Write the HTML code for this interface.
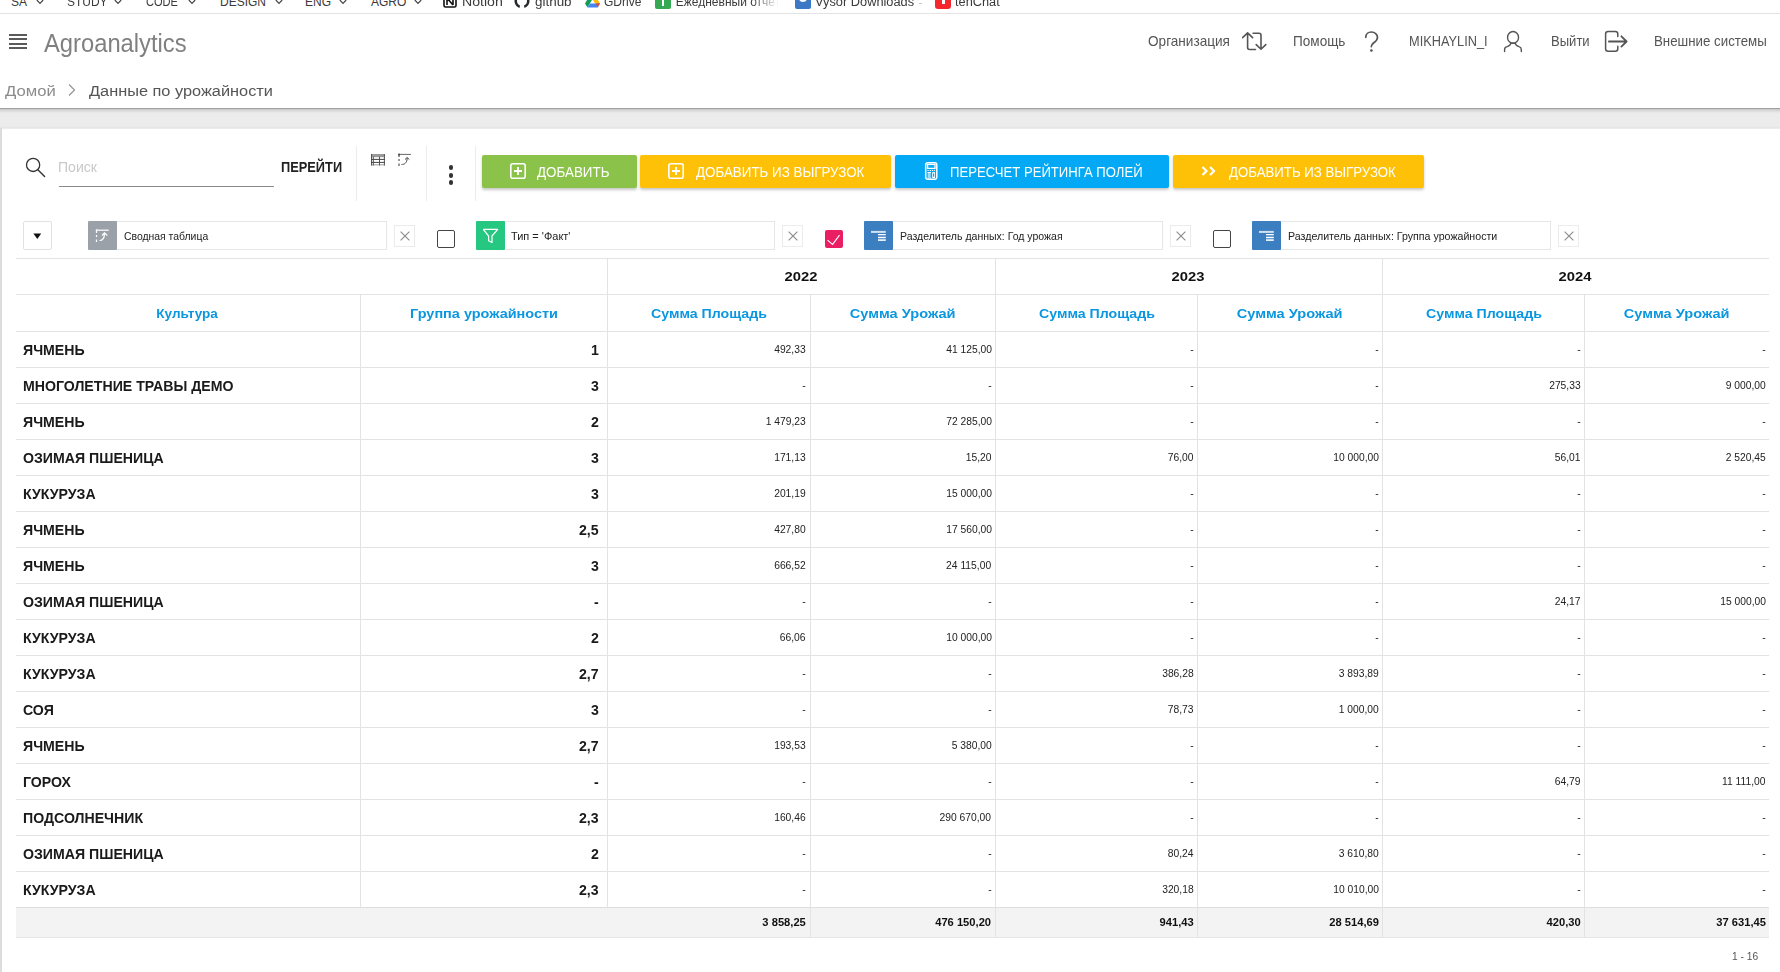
<!DOCTYPE html>
<html><head><meta charset="utf-8"><style>
html,body{margin:0;padding:0;width:1780px;height:972px;overflow:hidden;background:#fff;font-family:"Liberation Sans",sans-serif;}
.t{position:absolute;white-space:nowrap;}
.b{position:absolute;}
.btn{border-radius:2px;box-shadow:0 2px 3px rgba(0,0,0,0.22);}
</style></head><body>
<div class="t" id="bm_SA" style="top:-4.16px;font-size:12px;line-height:12px;color:#3a3a3a;font-weight:400;left:11px;"><span>SA</span></div>
<div class="t" id="bm_STUDY" style="top:-4.16px;font-size:12px;line-height:12px;color:#3a3a3a;font-weight:400;left:66.60000000000001px;"><span style="display:inline-block;transform:scaleX(0.9949);transform-origin:0 0">STUDY</span></div>
<div class="t" id="bm_CODE" style="top:-4.16px;font-size:12px;line-height:12px;color:#3a3a3a;font-weight:400;left:146.0px;"><span style="display:inline-block;transform:scaleX(0.9213);transform-origin:0 0">CODE</span></div>
<div class="t" id="bm_DESIGN" style="top:-4.16px;font-size:12px;line-height:12px;color:#3a3a3a;font-weight:400;left:220px;"><span>DESIGN</span></div>
<div class="t" id="bm_ENG" style="top:-4.16px;font-size:12px;line-height:12px;color:#3a3a3a;font-weight:400;left:305px;"><span>ENG</span></div>
<div class="t" id="bm_AGRO" style="top:-4.16px;font-size:12px;line-height:12px;color:#3a3a3a;font-weight:400;left:371px;"><span>AGRO</span></div>
<svg class="b" style="left:35.5px;top:-1px" width="8" height="6" viewBox="0 0 8 6"><path d="M0.8 1 L4 4.3 L7.2 1" fill="none" stroke="#444" stroke-width="1.2"/></svg>
<svg class="b" style="left:114px;top:-1px" width="8" height="6" viewBox="0 0 8 6"><path d="M0.8 1 L4 4.3 L7.2 1" fill="none" stroke="#444" stroke-width="1.2"/></svg>
<svg class="b" style="left:188px;top:-1px" width="8" height="6" viewBox="0 0 8 6"><path d="M0.8 1 L4 4.3 L7.2 1" fill="none" stroke="#444" stroke-width="1.2"/></svg>
<svg class="b" style="left:275px;top:-1px" width="8" height="6" viewBox="0 0 8 6"><path d="M0.8 1 L4 4.3 L7.2 1" fill="none" stroke="#444" stroke-width="1.2"/></svg>
<svg class="b" style="left:339px;top:-1px" width="8" height="6" viewBox="0 0 8 6"><path d="M0.8 1 L4 4.3 L7.2 1" fill="none" stroke="#444" stroke-width="1.2"/></svg>
<svg class="b" style="left:414px;top:-1px" width="8" height="6" viewBox="0 0 8 6"><path d="M0.8 1 L4 4.3 L7.2 1" fill="none" stroke="#444" stroke-width="1.2"/></svg>
<svg class="b" style="left:443px;top:-4px" width="14" height="12" viewBox="0 0 14 12"><rect x="1" y="0" width="12" height="11" rx="1.5" fill="#fff" stroke="#111" stroke-width="1.6"/><path d="M4 2 L4 9 M4 2 L10 9 M10 2 L10 9" stroke="#111" stroke-width="1.6" fill="none"/></svg>
<div class="t" id="bm_notion" style="top:-4.16px;font-size:12px;line-height:12px;color:#3a3a3a;font-weight:400;left:461.59999999999997px;"><span style="display:inline-block;transform:scaleX(1.1773);transform-origin:0 0">Notion</span></div>
<svg class="b" style="left:514px;top:-6px" width="16" height="15" viewBox="0 0 16 15"><path d="M8 0 C3.5 0 0.5 3 0.5 7 C0.5 10.5 3 13 5.5 14 L6 11.5 C4 10.5 3 9 3 7 C3 4.5 5 2.5 8 2.5 C11 2.5 13 4.5 13 7 C13 9 12 10.5 10 11.5 L10.5 14 C13 13 15.5 10.5 15.5 7 C15.5 3 12.5 0 8 0Z" fill="#24292e"/></svg>
<div class="t" id="bm_github" style="top:-4.16px;font-size:12px;line-height:12px;color:#3a3a3a;font-weight:400;left:534.6px;"><span style="display:inline-block;transform:scaleX(1.1192);transform-origin:0 0">github</span></div>
<svg class="b" style="left:585px;top:-5px" width="15" height="13" viewBox="0 0 15 13"><path d="M5 0 L10 0 L15 8.5 L12.5 12.5 Z" fill="#fbbc04"/><path d="M5 0 L0 8.5 L2.5 12.5 L7.5 4Z" fill="#0f9d58"/><path d="M2.5 12.5 L12.5 12.5 L15 8.5 L5 8.5Z" fill="#4285f4"/><path d="M12.5 12.5 L15 8.5 L11 8.5Z" fill="#ea4335"/></svg>
<div class="t" id="bm_gdrive" style="top:-4.16px;font-size:12px;line-height:12px;color:#3a3a3a;font-weight:400;left:604.1999999999999px;"><span style="display:inline-block;transform:scaleX(1.0029);transform-origin:0 0">GDrive</span></div>
<div class="b" style="left:655px;top:-6px;width:16px;height:15px;background:#34a853;border-radius:2px"></div><div class="b" style="left:661.5px;top:-6px;width:2.5px;height:12px;background:#fff"></div>
<div class="t" style="left:675.8px;top:-4.16px;font-size:12px;line-height:12px;color:#3a3a3a;width:105px;overflow:hidden;white-space:nowrap;-webkit-mask-image:linear-gradient(90deg,#000 72%,transparent 98%)"><span id="bm_ej" style="letter-spacing:0px">Ежедневный отчет</span></div>
<div class="b" style="left:795px;top:-6px;width:16px;height:15px;background:#3c78c6;border-radius:2px"></div><div class="b" style="left:799px;top:-3px;width:8px;height:5px;background:#fff;border-radius:0 0 4px 4px"></div>
<div class="t" id="bm_vysor" style="top:-4.16px;font-size:12px;line-height:12px;color:#3a3a3a;font-weight:400;left:815px;"><span style="display:inline-block;transform:scaleX(1.0664);transform-origin:0 0">Vysor Downloads</span></div>
<div class="b" style="left:919px;top:3px;width:3px;height:1px;background:#c8c8c8"></div>
<div class="b" style="left:935px;top:-6px;width:16px;height:15px;background:#f4282c;border-radius:3px"></div><div class="b" style="left:941.5px;top:-6px;width:3px;height:10px;background:#fff"></div>
<div class="t" id="bm_ten" style="top:-4.16px;font-size:12px;line-height:12px;color:#3a3a3a;font-weight:400;left:954.8000000000001px;"><span style="display:inline-block;transform:scaleX(1.0647);transform-origin:0 0">tenChat</span></div>
<div class="b" style="left:0px;top:13px;width:1780px;height:1px;background:#e3e3e3"></div>
<div class="b" style="left:8.5px;top:34px;width:18px;height:2px;background:#5a5a5a"></div>
<div class="b" style="left:8.5px;top:38px;width:18px;height:2px;background:#5a5a5a"></div>
<div class="b" style="left:8.5px;top:43px;width:18px;height:2px;background:#5a5a5a"></div>
<div class="b" style="left:8.5px;top:47px;width:18px;height:2px;background:#5a5a5a"></div>
<div class="t" id="brand" style="top:29.99px;font-size:26px;line-height:26px;color:#808080;font-weight:400;left:44.199999999999996px;"><span style="display:inline-block;transform:scaleX(0.9136);transform-origin:0 0">Agroanalytics</span></div>
<div class="t" id="h_org" style="top:34.48px;font-size:14.2px;line-height:14.2px;color:#555;font-weight:400;left:1147.8px;"><span style="display:inline-block;transform:scaleX(0.9578);transform-origin:0 0">Организация</span></div>
<div class="t" id="h_help" style="top:34.48px;font-size:14.2px;line-height:14.2px;color:#555;font-weight:400;left:1293.2px;"><span style="display:inline-block;transform:scaleX(0.9569);transform-origin:0 0">Помощь</span></div>
<div class="t" id="h_user" style="top:34.48px;font-size:14.2px;line-height:14.2px;color:#555;font-weight:400;left:1409.0px;"><span style="display:inline-block;transform:scaleX(0.9013);transform-origin:0 0">MIKHAYLIN_I</span></div>
<div class="t" id="h_exit" style="top:34.48px;font-size:14.2px;line-height:14.2px;color:#555;font-weight:400;left:1551px;"><span style="display:inline-block;transform:scaleX(0.9203);transform-origin:0 0">Выйти</span></div>
<div class="t" id="h_ext" style="top:34.48px;font-size:14.2px;line-height:14.2px;color:#555;font-weight:400;left:1654px;"><span style="display:inline-block;transform:scaleX(0.9362);transform-origin:0 0">Внешние системы</span></div>
<svg class="b" style="left:1242px;top:31px" width="26" height="21" viewBox="0 0 26 21"><path d="M0.6 6.6 L5.6 1.8 L10.6 6.6 M5.6 2 V16.5 Q5.6 18.5 7.6 18.5 H13.5" fill="none" stroke="#555" stroke-width="1.6" stroke-linecap="round" stroke-linejoin="round"/><path d="M11.1 2.3 H17 Q19 2.3 19 4.3 V18.2 M14.2 13.6 L19 18.3 L23.8 13.6" fill="none" stroke="#555" stroke-width="1.6" stroke-linecap="round" stroke-linejoin="round"/></svg>
<svg class="b" style="left:1358px;top:28px" width="26" height="27" viewBox="0 0 26 27"><path d="M7.8 9.3 C7.8 6 10.4 4 13.4 4 C16.7 4 19.5 6.3 19.5 9.3 C19.5 12.5 17 13.8 15.5 15 C14 16.3 13.3 17 13.3 18.6" fill="none" stroke="#555" stroke-width="1.7" stroke-linecap="round"/><circle cx="13.4" cy="22.5" r="1.35" fill="#555"/></svg>
<svg class="b" style="left:1500px;top:28px" width="26" height="27" viewBox="0 0 26 27"><ellipse cx="13.05" cy="9.4" rx="5.5" ry="5.9" fill="none" stroke="#555" stroke-width="1.4"/><path d="M10.7 15.3 C10.7 17.5 9 18 7 18.7 C5 19.3 4.6 20 4.6 21.5 V23.5 M15.4 15.3 C15.4 17.5 17 18 19 18.7 C21 19.3 21.3 20 21.3 21.5 V23.5 M10.7 15.3 H15.4" fill="none" stroke="#555" stroke-width="1.4" stroke-linecap="round"/></svg>
<svg class="b" style="left:1600px;top:28px" width="30" height="27" viewBox="0 0 30 27"><path d="M17.8 8.6 V6 C17.8 4.6 16.7 3.5 15.3 3.5 H8.1 C6.7 3.5 5.6 4.6 5.6 6 V20.7 C5.6 22.1 6.7 23.2 8.1 23.2 H15.3 C16.7 23.2 17.8 22.1 17.8 20.7 V18.2" fill="none" stroke="#555" stroke-width="1.5" stroke-linecap="round"/><path d="M8.9 13.5 H26.3 M21.4 8.3 L26.6 13.5 L21.4 18.6" fill="none" stroke="#555" stroke-width="1.8" stroke-linecap="round" stroke-linejoin="round"/></svg>
<div class="t" id="bc_home" style="top:82.56px;font-size:15.4px;line-height:15.4px;color:#8c8c8c;font-weight:400;left:5.0px;"><span style="display:inline-block;transform:scaleX(1.0835);transform-origin:0 0">Домой</span></div>
<svg class="b" style="left:67px;top:83px" width="10" height="14" viewBox="0 0 10 14"><path d="M2 1.5 L7.5 7 L2 12.5" fill="none" stroke="#999" stroke-width="1.3"/></svg>
<div class="t" id="bc_page" style="top:82.56px;font-size:15.4px;line-height:15.4px;color:#555;font-weight:400;left:89px;"><span style="display:inline-block;transform:scaleX(1.0607);transform-origin:0 0">Данные по урожайности</span></div>
<div class="b" style="left:0px;top:108px;width:1780px;height:1px;background:#a0a0a0"></div>
<div class="b" style="left:0px;top:109px;width:1780px;height:20px;background:#ececec"></div>
<div class="b" style="left:0px;top:109px;width:1780px;height:4px;background:linear-gradient(#cacaca,#ececec)"></div>
<div class="b" style="left:0px;top:126px;width:1780px;height:2px;background:linear-gradient(#ebebeb,#e4e4e4)"></div>
<div class="b" style="left:2px;top:129px;width:1778px;height:843px;background:#fff"></div>
<div class="b" style="left:0px;top:128px;width:2px;height:844px;background:#dcdcdc"></div>
<svg class="b" style="left:24px;top:156px" width="23" height="23" viewBox="0 0 23 23"><circle cx="9.1" cy="8.9" r="6.6" fill="none" stroke="#333" stroke-width="1.3"/><path d="M13.8 13.7 L20.6 20.6" stroke="#333" stroke-width="1.4" stroke-linecap="round"/></svg>
<div class="t" id="srch" style="top:159.91px;font-size:14.4px;line-height:14.4px;color:#c9c9c9;font-weight:400;left:58.0px;"><span style="display:inline-block;transform:scaleX(0.9765);transform-origin:0 0">Поиск</span></div>
<div class="b" style="left:59px;top:185.5px;width:215px;height:1.5px;background:#8a8a8a"></div>
<div class="t" id="go" style="top:159.83px;font-size:14.5px;line-height:14.5px;color:#222;font-weight:700;left:280.8px;"><span style="display:inline-block;transform:scaleX(0.8841);transform-origin:0 0">ПЕРЕЙТИ</span></div>
<div class="b" style="left:356px;top:146px;width:1px;height:55px;background:#ececec"></div>
<div class="b" style="left:426px;top:146px;width:1px;height:55px;background:#ececec"></div>
<div class="b" style="left:475px;top:146px;width:1px;height:55px;background:#ececec"></div>
<svg class="b" style="left:370px;top:154px" width="16" height="12" viewBox="0 0 16 12"><rect x="1" y="0" width="14" height="3.2" fill="#9a9a9a"/><rect x="1" y="10" width="14" height="1.5" fill="#bdbdbd"/><path d="M1.5 0 V11.5 M14.4 0 V11.5 M3.3 2.5 V11.5 M9.5 2.5 V11.5" stroke="#555" stroke-width="1"/><path d="M1 5.4 H15 M1 8.4 H15" stroke="#444" stroke-width="1"/></svg>
<svg class="b" style="left:397px;top:153px" width="15" height="14" viewBox="0 0 15 14"><path d="M2 1.4 H13.9" stroke="#666" stroke-width="1"/><circle cx="2" cy="1.5" r="0.9" fill="#333"/><path d="M2 2 V4 M2 6 V8 M2 10.5 V13" stroke="#333" stroke-width="1"/><path d="M4.5 11.5 C7 11.5 10 10.5 10.2 5 M8 6.5 L10.2 4.5 L12.3 6.5" fill="none" stroke="#444" stroke-width="1"/></svg>
<div class="b" style="left:448.65px;top:165.25px;width:4.7px;height:4.7px;border-radius:50%;background:#333"></div>
<div class="b" style="left:448.65px;top:172.95000000000002px;width:4.7px;height:4.7px;border-radius:50%;background:#333"></div>
<div class="b" style="left:448.65px;top:180.45000000000002px;width:4.7px;height:4.7px;border-radius:50%;background:#333"></div>
<div class="b btn" style="left:482px;top:155px;width:155px;height:33px;background:#8bc34a"></div>
<svg class="b" style="left:510px;top:163px" width="16" height="16" viewBox="0 0 16 16"><rect x="0.8" y="0.8" width="14.4" height="14.4" rx="2" fill="none" stroke="#fff" stroke-width="1.6"/><path d="M8 4 V12 M4 8 H12" stroke="#fff" stroke-width="1.8"/></svg>
<div class="t" id="b1" style="top:165.37px;font-size:14.8px;line-height:14.8px;color:#fff;font-weight:400;left:536.8000000000001px;"><span style="display:inline-block;transform:scaleX(0.9051);transform-origin:0 0">ДОБАВИТЬ</span></div>
<div class="b btn" style="left:640px;top:155px;width:251px;height:33px;background:#ffc107"></div>
<svg class="b" style="left:668px;top:163px" width="16" height="16" viewBox="0 0 16 16"><rect x="0.8" y="0.8" width="14.4" height="14.4" rx="2" fill="none" stroke="#fff" stroke-width="1.6"/><path d="M8 4 V12 M4 8 H12" stroke="#fff" stroke-width="1.8"/></svg>
<div class="t" id="b2" style="top:165.37px;font-size:14.8px;line-height:14.8px;color:#fff;font-weight:400;left:696px;"><span style="display:inline-block;transform:scaleX(0.9038);transform-origin:0 0">ДОБАВИТЬ ИЗ ВЫГРУЗОК</span></div>
<div class="b btn" style="left:895px;top:155px;width:274px;height:33px;background:#03a9f4"></div>
<svg class="b" style="left:924px;top:162px" width="14" height="18" viewBox="0 0 14 18"><rect x="1.7" y="0.8" width="11.1" height="16.5" rx="2" fill="none" stroke="#fff" stroke-width="1.5"/><rect x="3.6" y="2.4" width="7.4" height="4" fill="none" stroke="#fff" stroke-width="1.3"/><path d="M3.5 8.5 H11" stroke="#fff" stroke-width="1" stroke-dasharray="1.2 1"/><path d="M3.5 10.5 H7 M3.5 16 H7" stroke="#fff" stroke-width="1"/><rect x="3.7" y="11" width="3" height="4.5" fill="#9fdcfb"/><rect x="8.2" y="10.2" width="2.8" height="5.8" fill="#fff"/><rect x="9" y="11.5" width="1.2" height="3.2" fill="#03a9f4"/></svg>
<div class="t" id="b3" style="top:165.37px;font-size:14.8px;line-height:14.8px;color:#fff;font-weight:400;left:950px;"><span style="display:inline-block;transform:scaleX(0.8868);transform-origin:0 0">ПЕРЕСЧЕТ РЕЙТИНГА ПОЛЕЙ</span></div>
<div class="b btn" style="left:1173px;top:155px;width:251px;height:33px;background:#ffc107"></div>
<svg class="b" style="left:1201px;top:165px" width="16" height="12" viewBox="0 0 16 12"><path d="M1.5 2 L5.5 6 L1.5 10 M9 2 L13 6 L9 10" fill="none" stroke="#fff" stroke-width="2.2"/></svg>
<div class="t" id="b4" style="top:165.37px;font-size:14.8px;line-height:14.8px;color:#fff;font-weight:400;left:1229px;"><span style="display:inline-block;transform:scaleX(0.8952);transform-origin:0 0">ДОБАВИТЬ ИЗ ВЫГРУЗОК</span></div>
<div class="b" style="left:23px;top:221px;width:27px;height:27px;border:1px solid #e2e2e2;border-radius:2px;background:#fff"></div>
<svg class="b" style="left:33px;top:232.5px" width="9" height="7" viewBox="0 0 9 7"><path d="M0.4 0.5 H8.2 L4.3 6Z" fill="#111"/></svg>
<div class="b" style="left:116px;top:221px;width:271px;height:29px;border:1px solid #e6e6e6;border-left:none;box-sizing:border-box;background:#fff"></div>
<div class="b" style="left:88px;top:221px;width:29px;height:29px;background:#9aa1a9;border-radius:1px"></div>
<svg class="b" style="left:95px;top:227px" width="16" height="17" viewBox="0 0 16 17"><path d="M1.5 3.2 H13.8" stroke="#fff" stroke-width="1.2"/><circle cx="1.6" cy="3.2" r="1" fill="#fff"/><path d="M1.5 4 V6 M1.5 8 V10 M1.5 12.5 V15" stroke="#fff" stroke-width="1.2"/><path d="M4.5 13.5 C7 13.5 9.5 12.5 9.5 6.2 M7 8.5 L9.5 5.8 L12.3 8.5" fill="none" stroke="#fff" stroke-width="1.2"/></svg>
<div class="t" id="f1" style="top:230.59px;font-size:11px;line-height:11px;color:#222;font-weight:400;left:124px;"><span style="display:inline-block;transform:scaleX(0.9461);transform-origin:0 0">Сводная таблица</span></div>
<div class="b" style="left:394px;top:225px;width:21px;height:22px;border:1px solid #ebebeb;box-sizing:border-box;background:#fff"></div>
<svg class="b" style="left:399.5px;top:231px" width="10" height="10" viewBox="0 0 10 10"><path d="M0.6 0.6 L9.4 9.4 M9.4 0.6 L0.6 9.4" stroke="#8a8a8a" stroke-width="1.1"/></svg>
<div class="b" style="left:437px;top:230px;width:18px;height:18px;border:1.6px solid #444;border-radius:2px;box-sizing:border-box"></div>
<div class="b" style="left:504px;top:221px;width:271px;height:29px;border:1px solid #e6e6e6;border-left:none;box-sizing:border-box;background:#fff"></div>
<div class="b" style="left:476px;top:221px;width:29px;height:29px;background:#26c780;border-radius:1px"></div>
<svg class="b" style="left:483px;top:227px" width="16" height="17" viewBox="0 0 16 17"><path d="M0.3 2.4 H14.7 L9 9 V15.5 L5.6 13.8 V9 Z" fill="none" stroke="#fff" stroke-width="1.2" stroke-linejoin="round"/></svg>
<div class="t" id="f2" style="top:230.59px;font-size:11px;line-height:11px;color:#222;font-weight:400;left:511.4px;"><span style="display:inline-block;transform:scaleX(0.9984);transform-origin:0 0">Тип = 'Факт'</span></div>
<div class="b" style="left:782px;top:225px;width:21px;height:22px;border:1px solid #ebebeb;box-sizing:border-box;background:#fff"></div>
<svg class="b" style="left:787.5px;top:231px" width="10" height="10" viewBox="0 0 10 10"><path d="M0.6 0.6 L9.4 9.4 M9.4 0.6 L0.6 9.4" stroke="#8a8a8a" stroke-width="1.1"/></svg>
<div class="b" style="left:825px;top:230px;width:18px;height:18px;background:#e91e63;border-radius:2px"></div>
<svg class="b" style="left:825px;top:230px" width="18" height="18" viewBox="0 0 18 18"><path d="M2.5 10.2 L7.6 14.4 L14.5 5.1" fill="none" stroke="#fff" stroke-width="1.1"/></svg>
<div class="b" style="left:892px;top:221px;width:271px;height:29px;border:1px solid #e6e6e6;border-left:none;box-sizing:border-box;background:#fff"></div>
<div class="b" style="left:864px;top:221px;width:29px;height:29px;background:#3b7fc0;border-radius:1px"></div>
<svg class="b" style="left:871px;top:229px" width="16" height="13" viewBox="0 0 16 13"><path d="M0 2.9 H14.8" stroke="#d3e2f0" stroke-width="2"/><path d="M7 5.6 H14.8 M7 8.5 H14.8" stroke="#fff" stroke-width="1.4"/><path d="M7 11.1 H14.8" stroke="#e6eef6" stroke-width="1.8"/></svg>
<div class="t" id="f3" style="top:230.59px;font-size:11px;line-height:11px;color:#222;font-weight:400;left:899.9px;"><span style="display:inline-block;transform:scaleX(0.9565);transform-origin:0 0">Разделитель данных: Год урожая</span></div>
<div class="b" style="left:1170px;top:225px;width:21px;height:22px;border:1px solid #ebebeb;box-sizing:border-box;background:#fff"></div>
<svg class="b" style="left:1175.5px;top:231px" width="10" height="10" viewBox="0 0 10 10"><path d="M0.6 0.6 L9.4 9.4 M9.4 0.6 L0.6 9.4" stroke="#8a8a8a" stroke-width="1.1"/></svg>
<div class="b" style="left:1213px;top:230px;width:18px;height:18px;border:1.6px solid #444;border-radius:2px;box-sizing:border-box"></div>
<div class="b" style="left:1280px;top:221px;width:271px;height:29px;border:1px solid #e6e6e6;border-left:none;box-sizing:border-box;background:#fff"></div>
<div class="b" style="left:1252px;top:221px;width:29px;height:29px;background:#3b7fc0;border-radius:1px"></div>
<svg class="b" style="left:1259px;top:229px" width="16" height="13" viewBox="0 0 16 13"><path d="M0 2.9 H14.8" stroke="#d3e2f0" stroke-width="2"/><path d="M7 5.6 H14.8 M7 8.5 H14.8" stroke="#fff" stroke-width="1.4"/><path d="M7 11.1 H14.8" stroke="#e6eef6" stroke-width="1.8"/></svg>
<div class="t" id="f4" style="top:230.59px;font-size:11px;line-height:11px;color:#222;font-weight:400;left:1288.2px;"><span style="display:inline-block;transform:scaleX(0.9667);transform-origin:0 0">Разделитель данных: Группа урожайности</span></div>
<div class="b" style="left:1558px;top:225px;width:21px;height:22px;border:1px solid #ebebeb;box-sizing:border-box;background:#fff"></div>
<svg class="b" style="left:1563.5px;top:231px" width="10" height="10" viewBox="0 0 10 10"><path d="M0.6 0.6 L9.4 9.4 M9.4 0.6 L0.6 9.4" stroke="#8a8a8a" stroke-width="1.1"/></svg>
<div class="b" style="left:16px;top:258px;width:1753px;height:1px;background:#e3e3e3"></div>
<div class="b" style="left:16px;top:294px;width:1753px;height:1px;background:#e3e3e3"></div>
<div class="b" style="left:16px;top:331px;width:1753px;height:1px;background:#e3e3e3"></div>
<div class="b" style="left:16px;top:367px;width:1753px;height:1px;background:#e3e3e3"></div>
<div class="b" style="left:16px;top:403px;width:1753px;height:1px;background:#e3e3e3"></div>
<div class="b" style="left:16px;top:439px;width:1753px;height:1px;background:#e3e3e3"></div>
<div class="b" style="left:16px;top:475px;width:1753px;height:1px;background:#e3e3e3"></div>
<div class="b" style="left:16px;top:511px;width:1753px;height:1px;background:#e3e3e3"></div>
<div class="b" style="left:16px;top:547px;width:1753px;height:1px;background:#e3e3e3"></div>
<div class="b" style="left:16px;top:583px;width:1753px;height:1px;background:#e3e3e3"></div>
<div class="b" style="left:16px;top:619px;width:1753px;height:1px;background:#e3e3e3"></div>
<div class="b" style="left:16px;top:655px;width:1753px;height:1px;background:#e3e3e3"></div>
<div class="b" style="left:16px;top:691px;width:1753px;height:1px;background:#e3e3e3"></div>
<div class="b" style="left:16px;top:727px;width:1753px;height:1px;background:#e3e3e3"></div>
<div class="b" style="left:16px;top:763px;width:1753px;height:1px;background:#e3e3e3"></div>
<div class="b" style="left:16px;top:799px;width:1753px;height:1px;background:#e3e3e3"></div>
<div class="b" style="left:16px;top:835px;width:1753px;height:1px;background:#e3e3e3"></div>
<div class="b" style="left:16px;top:871px;width:1753px;height:1px;background:#e3e3e3"></div>
<div class="b" style="left:16px;top:907px;width:1753px;height:1px;background:#e3e3e3"></div>
<div class="b" style="left:16px;top:907px;width:1753px;height:30px;background:#f3f3f3"></div>
<div class="b" style="left:16px;top:907px;width:1753px;height:1px;background:#dedede"></div>
<div class="b" style="left:16px;top:937px;width:1753px;height:1px;background:#e6e6e6"></div>
<div class="b" style="left:607px;top:258px;width:1px;height:649px;background:#e3e3e3"></div>
<div class="b" style="left:995px;top:258px;width:1px;height:679px;background:#e3e3e3"></div>
<div class="b" style="left:1382px;top:258px;width:1px;height:679px;background:#e3e3e3"></div>
<div class="b" style="left:360px;top:294px;width:1px;height:613px;background:#e3e3e3"></div>
<div class="b" style="left:810px;top:294px;width:1px;height:643px;background:#e3e3e3"></div>
<div class="b" style="left:1197px;top:294px;width:1px;height:643px;background:#e3e3e3"></div>
<div class="b" style="left:1584px;top:294px;width:1px;height:643px;background:#e3e3e3"></div>
<div class="t" id="yr2022" style="top:270.27px;font-size:13.5px;line-height:13.5px;color:#111;font-weight:700;left:401.0px;width:800px;text-align:center;"><span style="display:inline-block;transform:scaleX(1.0956);transform-origin:50% 0">2022</span></div>
<div class="t" id="yr2023" style="top:270.27px;font-size:13.5px;line-height:13.5px;color:#111;font-weight:700;left:788.5px;width:800px;text-align:center;"><span style="display:inline-block;transform:scaleX(1.0956);transform-origin:50% 0">2023</span></div>
<div class="t" id="yr2024" style="top:270.27px;font-size:13.5px;line-height:13.5px;color:#111;font-weight:700;left:1175.5px;width:800px;text-align:center;"><span style="display:inline-block;transform:scaleX(1.0956);transform-origin:50% 0">2024</span></div>
<div class="t" id="hd0" style="top:307.20px;font-size:13.7px;line-height:13.7px;color:#0b96e0;font-weight:700;left:-212.5px;width:800px;text-align:center;"><span style="display:inline-block;transform:scaleX(0.9907);transform-origin:50% 0">Культура</span></div>
<div class="t" id="hd1" style="top:307.20px;font-size:13.7px;line-height:13.7px;color:#0b96e0;font-weight:700;left:84.0px;width:800px;text-align:center;"><span style="display:inline-block;transform:scaleX(1.0562);transform-origin:50% 0">Группа урожайности</span></div>
<div class="t" id="hd2" style="top:307.20px;font-size:13.7px;line-height:13.7px;color:#0b96e0;font-weight:700;left:309.0px;width:800px;text-align:center;"><span style="display:inline-block;transform:scaleX(1.0357);transform-origin:50% 0">Сумма Площадь</span></div>
<div class="t" id="hd3" style="top:307.20px;font-size:13.7px;line-height:13.7px;color:#0b96e0;font-weight:700;left:503.0px;width:800px;text-align:center;"><span style="display:inline-block;transform:scaleX(1.0654);transform-origin:50% 0">Сумма Урожай</span></div>
<div class="t" id="hd4" style="top:307.20px;font-size:13.7px;line-height:13.7px;color:#0b96e0;font-weight:700;left:696.5px;width:800px;text-align:center;"><span style="display:inline-block;transform:scaleX(1.0357);transform-origin:50% 0">Сумма Площадь</span></div>
<div class="t" id="hd5" style="top:307.20px;font-size:13.7px;line-height:13.7px;color:#0b96e0;font-weight:700;left:890.0px;width:800px;text-align:center;"><span style="display:inline-block;transform:scaleX(1.0654);transform-origin:50% 0">Сумма Урожай</span></div>
<div class="t" id="hd6" style="top:307.20px;font-size:13.7px;line-height:13.7px;color:#0b96e0;font-weight:700;left:1083.5px;width:800px;text-align:center;"><span style="display:inline-block;transform:scaleX(1.0357);transform-origin:50% 0">Сумма Площадь</span></div>
<div class="t" id="hd7" style="top:307.20px;font-size:13.7px;line-height:13.7px;color:#0b96e0;font-weight:700;left:1277.0px;width:800px;text-align:center;"><span style="display:inline-block;transform:scaleX(1.0654);transform-origin:50% 0">Сумма Урожай</span></div>
<div class="t" id="r0" style="top:343.06px;font-size:14.1px;line-height:14.1px;color:#1a1a1a;font-weight:700;left:23px;"><span style="display:inline-block;transform:scaleX(1.0029);transform-origin:0 0">ЯЧМЕНЬ</span></div>
<div class="t" id="g0" style="top:343.06px;font-size:14.1px;line-height:14.1px;color:#1a1a1a;font-weight:700;left:-1.5px;width:600px;text-align:right;"><span style="display:inline-block;transform:scaleX(1.0029);transform-origin:100% 0">1</span></div>
<div class="t" id="n0_2" style="top:343.69px;font-size:11px;line-height:11px;color:#222;font-weight:400;left:206px;width:600px;text-align:right;"><span style="display:inline-block;transform:scaleX(0.9356);transform-origin:100% 0">492,33</span></div>
<div class="t" id="n0_3" style="top:343.69px;font-size:11px;line-height:11px;color:#222;font-weight:400;left:391.5px;width:600px;text-align:right;"><span style="display:inline-block;transform:scaleX(0.9356);transform-origin:100% 0">41 125,00</span></div>
<div class="t" id="n0_4" style="top:343.69px;font-size:11px;line-height:11px;color:#222;font-weight:400;left:593.5px;width:600px;text-align:right;"><span style="display:inline-block;transform:scaleX(0.9356);transform-origin:100% 0">-</span></div>
<div class="t" id="n0_5" style="top:343.69px;font-size:11px;line-height:11px;color:#222;font-weight:400;left:778.5px;width:600px;text-align:right;"><span style="display:inline-block;transform:scaleX(0.9356);transform-origin:100% 0">-</span></div>
<div class="t" id="n0_6" style="top:343.69px;font-size:11px;line-height:11px;color:#222;font-weight:400;left:981px;width:600px;text-align:right;"><span style="display:inline-block;transform:scaleX(0.9356);transform-origin:100% 0">-</span></div>
<div class="t" id="n0_7" style="top:343.69px;font-size:11px;line-height:11px;color:#222;font-weight:400;left:1165.5px;width:600px;text-align:right;"><span style="display:inline-block;transform:scaleX(0.9356);transform-origin:100% 0">-</span></div>
<div class="t" id="r1" style="top:379.06px;font-size:14.1px;line-height:14.1px;color:#1a1a1a;font-weight:700;left:23px;"><span style="display:inline-block;transform:scaleX(1.0029);transform-origin:0 0">МНОГОЛЕТНИЕ ТРАВЫ ДЕМО</span></div>
<div class="t" id="g1" style="top:379.06px;font-size:14.1px;line-height:14.1px;color:#1a1a1a;font-weight:700;left:-1.5px;width:600px;text-align:right;"><span style="display:inline-block;transform:scaleX(1.0029);transform-origin:100% 0">3</span></div>
<div class="t" id="n1_2" style="top:379.69px;font-size:11px;line-height:11px;color:#222;font-weight:400;left:206px;width:600px;text-align:right;"><span style="display:inline-block;transform:scaleX(0.9356);transform-origin:100% 0">-</span></div>
<div class="t" id="n1_3" style="top:379.69px;font-size:11px;line-height:11px;color:#222;font-weight:400;left:391.5px;width:600px;text-align:right;"><span style="display:inline-block;transform:scaleX(0.9356);transform-origin:100% 0">-</span></div>
<div class="t" id="n1_4" style="top:379.69px;font-size:11px;line-height:11px;color:#222;font-weight:400;left:593.5px;width:600px;text-align:right;"><span style="display:inline-block;transform:scaleX(0.9356);transform-origin:100% 0">-</span></div>
<div class="t" id="n1_5" style="top:379.69px;font-size:11px;line-height:11px;color:#222;font-weight:400;left:778.5px;width:600px;text-align:right;"><span style="display:inline-block;transform:scaleX(0.9356);transform-origin:100% 0">-</span></div>
<div class="t" id="n1_6" style="top:379.69px;font-size:11px;line-height:11px;color:#222;font-weight:400;left:981px;width:600px;text-align:right;"><span style="display:inline-block;transform:scaleX(0.9356);transform-origin:100% 0">275,33</span></div>
<div class="t" id="n1_7" style="top:379.69px;font-size:11px;line-height:11px;color:#222;font-weight:400;left:1165.5px;width:600px;text-align:right;"><span style="display:inline-block;transform:scaleX(0.9356);transform-origin:100% 0">9 000,00</span></div>
<div class="t" id="r2" style="top:415.06px;font-size:14.1px;line-height:14.1px;color:#1a1a1a;font-weight:700;left:23px;"><span style="display:inline-block;transform:scaleX(1.0029);transform-origin:0 0">ЯЧМЕНЬ</span></div>
<div class="t" id="g2" style="top:415.06px;font-size:14.1px;line-height:14.1px;color:#1a1a1a;font-weight:700;left:-1.5px;width:600px;text-align:right;"><span style="display:inline-block;transform:scaleX(1.0029);transform-origin:100% 0">2</span></div>
<div class="t" id="n2_2" style="top:415.69px;font-size:11px;line-height:11px;color:#222;font-weight:400;left:206px;width:600px;text-align:right;"><span style="display:inline-block;transform:scaleX(0.9356);transform-origin:100% 0">1 479,23</span></div>
<div class="t" id="n2_3" style="top:415.69px;font-size:11px;line-height:11px;color:#222;font-weight:400;left:391.5px;width:600px;text-align:right;"><span style="display:inline-block;transform:scaleX(0.9356);transform-origin:100% 0">72 285,00</span></div>
<div class="t" id="n2_4" style="top:415.69px;font-size:11px;line-height:11px;color:#222;font-weight:400;left:593.5px;width:600px;text-align:right;"><span style="display:inline-block;transform:scaleX(0.9356);transform-origin:100% 0">-</span></div>
<div class="t" id="n2_5" style="top:415.69px;font-size:11px;line-height:11px;color:#222;font-weight:400;left:778.5px;width:600px;text-align:right;"><span style="display:inline-block;transform:scaleX(0.9356);transform-origin:100% 0">-</span></div>
<div class="t" id="n2_6" style="top:415.69px;font-size:11px;line-height:11px;color:#222;font-weight:400;left:981px;width:600px;text-align:right;"><span style="display:inline-block;transform:scaleX(0.9356);transform-origin:100% 0">-</span></div>
<div class="t" id="n2_7" style="top:415.69px;font-size:11px;line-height:11px;color:#222;font-weight:400;left:1165.5px;width:600px;text-align:right;"><span style="display:inline-block;transform:scaleX(0.9356);transform-origin:100% 0">-</span></div>
<div class="t" id="r3" style="top:451.06px;font-size:14.1px;line-height:14.1px;color:#1a1a1a;font-weight:700;left:23px;"><span style="display:inline-block;transform:scaleX(1.0029);transform-origin:0 0">ОЗИМАЯ ПШЕНИЦА</span></div>
<div class="t" id="g3" style="top:451.06px;font-size:14.1px;line-height:14.1px;color:#1a1a1a;font-weight:700;left:-1.5px;width:600px;text-align:right;"><span style="display:inline-block;transform:scaleX(1.0029);transform-origin:100% 0">3</span></div>
<div class="t" id="n3_2" style="top:451.69px;font-size:11px;line-height:11px;color:#222;font-weight:400;left:206px;width:600px;text-align:right;"><span style="display:inline-block;transform:scaleX(0.9356);transform-origin:100% 0">171,13</span></div>
<div class="t" id="n3_3" style="top:451.69px;font-size:11px;line-height:11px;color:#222;font-weight:400;left:391.5px;width:600px;text-align:right;"><span style="display:inline-block;transform:scaleX(0.9356);transform-origin:100% 0">15,20</span></div>
<div class="t" id="n3_4" style="top:451.69px;font-size:11px;line-height:11px;color:#222;font-weight:400;left:593.5px;width:600px;text-align:right;"><span style="display:inline-block;transform:scaleX(0.9356);transform-origin:100% 0">76,00</span></div>
<div class="t" id="n3_5" style="top:451.69px;font-size:11px;line-height:11px;color:#222;font-weight:400;left:778.5px;width:600px;text-align:right;"><span style="display:inline-block;transform:scaleX(0.9356);transform-origin:100% 0">10 000,00</span></div>
<div class="t" id="n3_6" style="top:451.69px;font-size:11px;line-height:11px;color:#222;font-weight:400;left:981px;width:600px;text-align:right;"><span style="display:inline-block;transform:scaleX(0.9356);transform-origin:100% 0">56,01</span></div>
<div class="t" id="n3_7" style="top:451.69px;font-size:11px;line-height:11px;color:#222;font-weight:400;left:1165.5px;width:600px;text-align:right;"><span style="display:inline-block;transform:scaleX(0.9356);transform-origin:100% 0">2 520,45</span></div>
<div class="t" id="r4" style="top:487.06px;font-size:14.1px;line-height:14.1px;color:#1a1a1a;font-weight:700;left:23px;"><span style="display:inline-block;transform:scaleX(1.0029);transform-origin:0 0">КУКУРУЗА</span></div>
<div class="t" id="g4" style="top:487.06px;font-size:14.1px;line-height:14.1px;color:#1a1a1a;font-weight:700;left:-1.5px;width:600px;text-align:right;"><span style="display:inline-block;transform:scaleX(1.0029);transform-origin:100% 0">3</span></div>
<div class="t" id="n4_2" style="top:487.69px;font-size:11px;line-height:11px;color:#222;font-weight:400;left:206px;width:600px;text-align:right;"><span style="display:inline-block;transform:scaleX(0.9356);transform-origin:100% 0">201,19</span></div>
<div class="t" id="n4_3" style="top:487.69px;font-size:11px;line-height:11px;color:#222;font-weight:400;left:391.5px;width:600px;text-align:right;"><span style="display:inline-block;transform:scaleX(0.9356);transform-origin:100% 0">15 000,00</span></div>
<div class="t" id="n4_4" style="top:487.69px;font-size:11px;line-height:11px;color:#222;font-weight:400;left:593.5px;width:600px;text-align:right;"><span style="display:inline-block;transform:scaleX(0.9356);transform-origin:100% 0">-</span></div>
<div class="t" id="n4_5" style="top:487.69px;font-size:11px;line-height:11px;color:#222;font-weight:400;left:778.5px;width:600px;text-align:right;"><span style="display:inline-block;transform:scaleX(0.9356);transform-origin:100% 0">-</span></div>
<div class="t" id="n4_6" style="top:487.69px;font-size:11px;line-height:11px;color:#222;font-weight:400;left:981px;width:600px;text-align:right;"><span style="display:inline-block;transform:scaleX(0.9356);transform-origin:100% 0">-</span></div>
<div class="t" id="n4_7" style="top:487.69px;font-size:11px;line-height:11px;color:#222;font-weight:400;left:1165.5px;width:600px;text-align:right;"><span style="display:inline-block;transform:scaleX(0.9356);transform-origin:100% 0">-</span></div>
<div class="t" id="r5" style="top:523.06px;font-size:14.1px;line-height:14.1px;color:#1a1a1a;font-weight:700;left:23px;"><span style="display:inline-block;transform:scaleX(1.0029);transform-origin:0 0">ЯЧМЕНЬ</span></div>
<div class="t" id="g5" style="top:523.06px;font-size:14.1px;line-height:14.1px;color:#1a1a1a;font-weight:700;left:-1.5px;width:600px;text-align:right;"><span style="display:inline-block;transform:scaleX(1.0029);transform-origin:100% 0">2,5</span></div>
<div class="t" id="n5_2" style="top:523.69px;font-size:11px;line-height:11px;color:#222;font-weight:400;left:206px;width:600px;text-align:right;"><span style="display:inline-block;transform:scaleX(0.9356);transform-origin:100% 0">427,80</span></div>
<div class="t" id="n5_3" style="top:523.69px;font-size:11px;line-height:11px;color:#222;font-weight:400;left:391.5px;width:600px;text-align:right;"><span style="display:inline-block;transform:scaleX(0.9356);transform-origin:100% 0">17 560,00</span></div>
<div class="t" id="n5_4" style="top:523.69px;font-size:11px;line-height:11px;color:#222;font-weight:400;left:593.5px;width:600px;text-align:right;"><span style="display:inline-block;transform:scaleX(0.9356);transform-origin:100% 0">-</span></div>
<div class="t" id="n5_5" style="top:523.69px;font-size:11px;line-height:11px;color:#222;font-weight:400;left:778.5px;width:600px;text-align:right;"><span style="display:inline-block;transform:scaleX(0.9356);transform-origin:100% 0">-</span></div>
<div class="t" id="n5_6" style="top:523.69px;font-size:11px;line-height:11px;color:#222;font-weight:400;left:981px;width:600px;text-align:right;"><span style="display:inline-block;transform:scaleX(0.9356);transform-origin:100% 0">-</span></div>
<div class="t" id="n5_7" style="top:523.69px;font-size:11px;line-height:11px;color:#222;font-weight:400;left:1165.5px;width:600px;text-align:right;"><span style="display:inline-block;transform:scaleX(0.9356);transform-origin:100% 0">-</span></div>
<div class="t" id="r6" style="top:559.06px;font-size:14.1px;line-height:14.1px;color:#1a1a1a;font-weight:700;left:23px;"><span style="display:inline-block;transform:scaleX(1.0029);transform-origin:0 0">ЯЧМЕНЬ</span></div>
<div class="t" id="g6" style="top:559.06px;font-size:14.1px;line-height:14.1px;color:#1a1a1a;font-weight:700;left:-1.5px;width:600px;text-align:right;"><span style="display:inline-block;transform:scaleX(1.0029);transform-origin:100% 0">3</span></div>
<div class="t" id="n6_2" style="top:559.69px;font-size:11px;line-height:11px;color:#222;font-weight:400;left:206px;width:600px;text-align:right;"><span style="display:inline-block;transform:scaleX(0.9356);transform-origin:100% 0">666,52</span></div>
<div class="t" id="n6_3" style="top:559.69px;font-size:11px;line-height:11px;color:#222;font-weight:400;left:391.5px;width:600px;text-align:right;"><span style="display:inline-block;transform:scaleX(0.9356);transform-origin:100% 0">24 115,00</span></div>
<div class="t" id="n6_4" style="top:559.69px;font-size:11px;line-height:11px;color:#222;font-weight:400;left:593.5px;width:600px;text-align:right;"><span style="display:inline-block;transform:scaleX(0.9356);transform-origin:100% 0">-</span></div>
<div class="t" id="n6_5" style="top:559.69px;font-size:11px;line-height:11px;color:#222;font-weight:400;left:778.5px;width:600px;text-align:right;"><span style="display:inline-block;transform:scaleX(0.9356);transform-origin:100% 0">-</span></div>
<div class="t" id="n6_6" style="top:559.69px;font-size:11px;line-height:11px;color:#222;font-weight:400;left:981px;width:600px;text-align:right;"><span style="display:inline-block;transform:scaleX(0.9356);transform-origin:100% 0">-</span></div>
<div class="t" id="n6_7" style="top:559.69px;font-size:11px;line-height:11px;color:#222;font-weight:400;left:1165.5px;width:600px;text-align:right;"><span style="display:inline-block;transform:scaleX(0.9356);transform-origin:100% 0">-</span></div>
<div class="t" id="r7" style="top:595.06px;font-size:14.1px;line-height:14.1px;color:#1a1a1a;font-weight:700;left:23px;"><span style="display:inline-block;transform:scaleX(1.0029);transform-origin:0 0">ОЗИМАЯ ПШЕНИЦА</span></div>
<div class="t" id="g7" style="top:595.06px;font-size:14.1px;line-height:14.1px;color:#1a1a1a;font-weight:700;left:-1.5px;width:600px;text-align:right;"><span style="display:inline-block;transform:scaleX(1.0029);transform-origin:100% 0">-</span></div>
<div class="t" id="n7_2" style="top:595.69px;font-size:11px;line-height:11px;color:#222;font-weight:400;left:206px;width:600px;text-align:right;"><span style="display:inline-block;transform:scaleX(0.9356);transform-origin:100% 0">-</span></div>
<div class="t" id="n7_3" style="top:595.69px;font-size:11px;line-height:11px;color:#222;font-weight:400;left:391.5px;width:600px;text-align:right;"><span style="display:inline-block;transform:scaleX(0.9356);transform-origin:100% 0">-</span></div>
<div class="t" id="n7_4" style="top:595.69px;font-size:11px;line-height:11px;color:#222;font-weight:400;left:593.5px;width:600px;text-align:right;"><span style="display:inline-block;transform:scaleX(0.9356);transform-origin:100% 0">-</span></div>
<div class="t" id="n7_5" style="top:595.69px;font-size:11px;line-height:11px;color:#222;font-weight:400;left:778.5px;width:600px;text-align:right;"><span style="display:inline-block;transform:scaleX(0.9356);transform-origin:100% 0">-</span></div>
<div class="t" id="n7_6" style="top:595.69px;font-size:11px;line-height:11px;color:#222;font-weight:400;left:981px;width:600px;text-align:right;"><span style="display:inline-block;transform:scaleX(0.9356);transform-origin:100% 0">24,17</span></div>
<div class="t" id="n7_7" style="top:595.69px;font-size:11px;line-height:11px;color:#222;font-weight:400;left:1165.5px;width:600px;text-align:right;"><span style="display:inline-block;transform:scaleX(0.9356);transform-origin:100% 0">15 000,00</span></div>
<div class="t" id="r8" style="top:631.06px;font-size:14.1px;line-height:14.1px;color:#1a1a1a;font-weight:700;left:23px;"><span style="display:inline-block;transform:scaleX(1.0029);transform-origin:0 0">КУКУРУЗА</span></div>
<div class="t" id="g8" style="top:631.06px;font-size:14.1px;line-height:14.1px;color:#1a1a1a;font-weight:700;left:-1.5px;width:600px;text-align:right;"><span style="display:inline-block;transform:scaleX(1.0029);transform-origin:100% 0">2</span></div>
<div class="t" id="n8_2" style="top:631.69px;font-size:11px;line-height:11px;color:#222;font-weight:400;left:206px;width:600px;text-align:right;"><span style="display:inline-block;transform:scaleX(0.9356);transform-origin:100% 0">66,06</span></div>
<div class="t" id="n8_3" style="top:631.69px;font-size:11px;line-height:11px;color:#222;font-weight:400;left:391.5px;width:600px;text-align:right;"><span style="display:inline-block;transform:scaleX(0.9356);transform-origin:100% 0">10 000,00</span></div>
<div class="t" id="n8_4" style="top:631.69px;font-size:11px;line-height:11px;color:#222;font-weight:400;left:593.5px;width:600px;text-align:right;"><span style="display:inline-block;transform:scaleX(0.9356);transform-origin:100% 0">-</span></div>
<div class="t" id="n8_5" style="top:631.69px;font-size:11px;line-height:11px;color:#222;font-weight:400;left:778.5px;width:600px;text-align:right;"><span style="display:inline-block;transform:scaleX(0.9356);transform-origin:100% 0">-</span></div>
<div class="t" id="n8_6" style="top:631.69px;font-size:11px;line-height:11px;color:#222;font-weight:400;left:981px;width:600px;text-align:right;"><span style="display:inline-block;transform:scaleX(0.9356);transform-origin:100% 0">-</span></div>
<div class="t" id="n8_7" style="top:631.69px;font-size:11px;line-height:11px;color:#222;font-weight:400;left:1165.5px;width:600px;text-align:right;"><span style="display:inline-block;transform:scaleX(0.9356);transform-origin:100% 0">-</span></div>
<div class="t" id="r9" style="top:667.06px;font-size:14.1px;line-height:14.1px;color:#1a1a1a;font-weight:700;left:23px;"><span style="display:inline-block;transform:scaleX(1.0029);transform-origin:0 0">КУКУРУЗА</span></div>
<div class="t" id="g9" style="top:667.06px;font-size:14.1px;line-height:14.1px;color:#1a1a1a;font-weight:700;left:-1.5px;width:600px;text-align:right;"><span style="display:inline-block;transform:scaleX(1.0029);transform-origin:100% 0">2,7</span></div>
<div class="t" id="n9_2" style="top:667.69px;font-size:11px;line-height:11px;color:#222;font-weight:400;left:206px;width:600px;text-align:right;"><span style="display:inline-block;transform:scaleX(0.9356);transform-origin:100% 0">-</span></div>
<div class="t" id="n9_3" style="top:667.69px;font-size:11px;line-height:11px;color:#222;font-weight:400;left:391.5px;width:600px;text-align:right;"><span style="display:inline-block;transform:scaleX(0.9356);transform-origin:100% 0">-</span></div>
<div class="t" id="n9_4" style="top:667.69px;font-size:11px;line-height:11px;color:#222;font-weight:400;left:593.5px;width:600px;text-align:right;"><span style="display:inline-block;transform:scaleX(0.9356);transform-origin:100% 0">386,28</span></div>
<div class="t" id="n9_5" style="top:667.69px;font-size:11px;line-height:11px;color:#222;font-weight:400;left:778.5px;width:600px;text-align:right;"><span style="display:inline-block;transform:scaleX(0.9356);transform-origin:100% 0">3 893,89</span></div>
<div class="t" id="n9_6" style="top:667.69px;font-size:11px;line-height:11px;color:#222;font-weight:400;left:981px;width:600px;text-align:right;"><span style="display:inline-block;transform:scaleX(0.9356);transform-origin:100% 0">-</span></div>
<div class="t" id="n9_7" style="top:667.69px;font-size:11px;line-height:11px;color:#222;font-weight:400;left:1165.5px;width:600px;text-align:right;"><span style="display:inline-block;transform:scaleX(0.9356);transform-origin:100% 0">-</span></div>
<div class="t" id="r10" style="top:703.06px;font-size:14.1px;line-height:14.1px;color:#1a1a1a;font-weight:700;left:23px;"><span style="display:inline-block;transform:scaleX(1.0029);transform-origin:0 0">СОЯ</span></div>
<div class="t" id="g10" style="top:703.06px;font-size:14.1px;line-height:14.1px;color:#1a1a1a;font-weight:700;left:-1.5px;width:600px;text-align:right;"><span style="display:inline-block;transform:scaleX(1.0029);transform-origin:100% 0">3</span></div>
<div class="t" id="n10_2" style="top:703.69px;font-size:11px;line-height:11px;color:#222;font-weight:400;left:206px;width:600px;text-align:right;"><span style="display:inline-block;transform:scaleX(0.9356);transform-origin:100% 0">-</span></div>
<div class="t" id="n10_3" style="top:703.69px;font-size:11px;line-height:11px;color:#222;font-weight:400;left:391.5px;width:600px;text-align:right;"><span style="display:inline-block;transform:scaleX(0.9356);transform-origin:100% 0">-</span></div>
<div class="t" id="n10_4" style="top:703.69px;font-size:11px;line-height:11px;color:#222;font-weight:400;left:593.5px;width:600px;text-align:right;"><span style="display:inline-block;transform:scaleX(0.9356);transform-origin:100% 0">78,73</span></div>
<div class="t" id="n10_5" style="top:703.69px;font-size:11px;line-height:11px;color:#222;font-weight:400;left:778.5px;width:600px;text-align:right;"><span style="display:inline-block;transform:scaleX(0.9356);transform-origin:100% 0">1 000,00</span></div>
<div class="t" id="n10_6" style="top:703.69px;font-size:11px;line-height:11px;color:#222;font-weight:400;left:981px;width:600px;text-align:right;"><span style="display:inline-block;transform:scaleX(0.9356);transform-origin:100% 0">-</span></div>
<div class="t" id="n10_7" style="top:703.69px;font-size:11px;line-height:11px;color:#222;font-weight:400;left:1165.5px;width:600px;text-align:right;"><span style="display:inline-block;transform:scaleX(0.9356);transform-origin:100% 0">-</span></div>
<div class="t" id="r11" style="top:739.06px;font-size:14.1px;line-height:14.1px;color:#1a1a1a;font-weight:700;left:23px;"><span style="display:inline-block;transform:scaleX(1.0029);transform-origin:0 0">ЯЧМЕНЬ</span></div>
<div class="t" id="g11" style="top:739.06px;font-size:14.1px;line-height:14.1px;color:#1a1a1a;font-weight:700;left:-1.5px;width:600px;text-align:right;"><span style="display:inline-block;transform:scaleX(1.0029);transform-origin:100% 0">2,7</span></div>
<div class="t" id="n11_2" style="top:739.69px;font-size:11px;line-height:11px;color:#222;font-weight:400;left:206px;width:600px;text-align:right;"><span style="display:inline-block;transform:scaleX(0.9356);transform-origin:100% 0">193,53</span></div>
<div class="t" id="n11_3" style="top:739.69px;font-size:11px;line-height:11px;color:#222;font-weight:400;left:391.5px;width:600px;text-align:right;"><span style="display:inline-block;transform:scaleX(0.9356);transform-origin:100% 0">5 380,00</span></div>
<div class="t" id="n11_4" style="top:739.69px;font-size:11px;line-height:11px;color:#222;font-weight:400;left:593.5px;width:600px;text-align:right;"><span style="display:inline-block;transform:scaleX(0.9356);transform-origin:100% 0">-</span></div>
<div class="t" id="n11_5" style="top:739.69px;font-size:11px;line-height:11px;color:#222;font-weight:400;left:778.5px;width:600px;text-align:right;"><span style="display:inline-block;transform:scaleX(0.9356);transform-origin:100% 0">-</span></div>
<div class="t" id="n11_6" style="top:739.69px;font-size:11px;line-height:11px;color:#222;font-weight:400;left:981px;width:600px;text-align:right;"><span style="display:inline-block;transform:scaleX(0.9356);transform-origin:100% 0">-</span></div>
<div class="t" id="n11_7" style="top:739.69px;font-size:11px;line-height:11px;color:#222;font-weight:400;left:1165.5px;width:600px;text-align:right;"><span style="display:inline-block;transform:scaleX(0.9356);transform-origin:100% 0">-</span></div>
<div class="t" id="r12" style="top:775.06px;font-size:14.1px;line-height:14.1px;color:#1a1a1a;font-weight:700;left:23px;"><span style="display:inline-block;transform:scaleX(1.0029);transform-origin:0 0">ГОРОХ</span></div>
<div class="t" id="g12" style="top:775.06px;font-size:14.1px;line-height:14.1px;color:#1a1a1a;font-weight:700;left:-1.5px;width:600px;text-align:right;"><span style="display:inline-block;transform:scaleX(1.0029);transform-origin:100% 0">-</span></div>
<div class="t" id="n12_2" style="top:775.69px;font-size:11px;line-height:11px;color:#222;font-weight:400;left:206px;width:600px;text-align:right;"><span style="display:inline-block;transform:scaleX(0.9356);transform-origin:100% 0">-</span></div>
<div class="t" id="n12_3" style="top:775.69px;font-size:11px;line-height:11px;color:#222;font-weight:400;left:391.5px;width:600px;text-align:right;"><span style="display:inline-block;transform:scaleX(0.9356);transform-origin:100% 0">-</span></div>
<div class="t" id="n12_4" style="top:775.69px;font-size:11px;line-height:11px;color:#222;font-weight:400;left:593.5px;width:600px;text-align:right;"><span style="display:inline-block;transform:scaleX(0.9356);transform-origin:100% 0">-</span></div>
<div class="t" id="n12_5" style="top:775.69px;font-size:11px;line-height:11px;color:#222;font-weight:400;left:778.5px;width:600px;text-align:right;"><span style="display:inline-block;transform:scaleX(0.9356);transform-origin:100% 0">-</span></div>
<div class="t" id="n12_6" style="top:775.69px;font-size:11px;line-height:11px;color:#222;font-weight:400;left:981px;width:600px;text-align:right;"><span style="display:inline-block;transform:scaleX(0.9356);transform-origin:100% 0">64,79</span></div>
<div class="t" id="n12_7" style="top:775.69px;font-size:11px;line-height:11px;color:#222;font-weight:400;left:1165.5px;width:600px;text-align:right;"><span style="display:inline-block;transform:scaleX(0.9356);transform-origin:100% 0">11 111,00</span></div>
<div class="t" id="r13" style="top:811.06px;font-size:14.1px;line-height:14.1px;color:#1a1a1a;font-weight:700;left:23px;"><span style="display:inline-block;transform:scaleX(1.0029);transform-origin:0 0">ПОДСОЛНЕЧНИК</span></div>
<div class="t" id="g13" style="top:811.06px;font-size:14.1px;line-height:14.1px;color:#1a1a1a;font-weight:700;left:-1.5px;width:600px;text-align:right;"><span style="display:inline-block;transform:scaleX(1.0029);transform-origin:100% 0">2,3</span></div>
<div class="t" id="n13_2" style="top:811.69px;font-size:11px;line-height:11px;color:#222;font-weight:400;left:206px;width:600px;text-align:right;"><span style="display:inline-block;transform:scaleX(0.9356);transform-origin:100% 0">160,46</span></div>
<div class="t" id="n13_3" style="top:811.69px;font-size:11px;line-height:11px;color:#222;font-weight:400;left:391.5px;width:600px;text-align:right;"><span style="display:inline-block;transform:scaleX(0.9356);transform-origin:100% 0">290 670,00</span></div>
<div class="t" id="n13_4" style="top:811.69px;font-size:11px;line-height:11px;color:#222;font-weight:400;left:593.5px;width:600px;text-align:right;"><span style="display:inline-block;transform:scaleX(0.9356);transform-origin:100% 0">-</span></div>
<div class="t" id="n13_5" style="top:811.69px;font-size:11px;line-height:11px;color:#222;font-weight:400;left:778.5px;width:600px;text-align:right;"><span style="display:inline-block;transform:scaleX(0.9356);transform-origin:100% 0">-</span></div>
<div class="t" id="n13_6" style="top:811.69px;font-size:11px;line-height:11px;color:#222;font-weight:400;left:981px;width:600px;text-align:right;"><span style="display:inline-block;transform:scaleX(0.9356);transform-origin:100% 0">-</span></div>
<div class="t" id="n13_7" style="top:811.69px;font-size:11px;line-height:11px;color:#222;font-weight:400;left:1165.5px;width:600px;text-align:right;"><span style="display:inline-block;transform:scaleX(0.9356);transform-origin:100% 0">-</span></div>
<div class="t" id="r14" style="top:847.06px;font-size:14.1px;line-height:14.1px;color:#1a1a1a;font-weight:700;left:23px;"><span style="display:inline-block;transform:scaleX(1.0029);transform-origin:0 0">ОЗИМАЯ ПШЕНИЦА</span></div>
<div class="t" id="g14" style="top:847.06px;font-size:14.1px;line-height:14.1px;color:#1a1a1a;font-weight:700;left:-1.5px;width:600px;text-align:right;"><span style="display:inline-block;transform:scaleX(1.0029);transform-origin:100% 0">2</span></div>
<div class="t" id="n14_2" style="top:847.69px;font-size:11px;line-height:11px;color:#222;font-weight:400;left:206px;width:600px;text-align:right;"><span style="display:inline-block;transform:scaleX(0.9356);transform-origin:100% 0">-</span></div>
<div class="t" id="n14_3" style="top:847.69px;font-size:11px;line-height:11px;color:#222;font-weight:400;left:391.5px;width:600px;text-align:right;"><span style="display:inline-block;transform:scaleX(0.9356);transform-origin:100% 0">-</span></div>
<div class="t" id="n14_4" style="top:847.69px;font-size:11px;line-height:11px;color:#222;font-weight:400;left:593.5px;width:600px;text-align:right;"><span style="display:inline-block;transform:scaleX(0.9356);transform-origin:100% 0">80,24</span></div>
<div class="t" id="n14_5" style="top:847.69px;font-size:11px;line-height:11px;color:#222;font-weight:400;left:778.5px;width:600px;text-align:right;"><span style="display:inline-block;transform:scaleX(0.9356);transform-origin:100% 0">3 610,80</span></div>
<div class="t" id="n14_6" style="top:847.69px;font-size:11px;line-height:11px;color:#222;font-weight:400;left:981px;width:600px;text-align:right;"><span style="display:inline-block;transform:scaleX(0.9356);transform-origin:100% 0">-</span></div>
<div class="t" id="n14_7" style="top:847.69px;font-size:11px;line-height:11px;color:#222;font-weight:400;left:1165.5px;width:600px;text-align:right;"><span style="display:inline-block;transform:scaleX(0.9356);transform-origin:100% 0">-</span></div>
<div class="t" id="r15" style="top:883.06px;font-size:14.1px;line-height:14.1px;color:#1a1a1a;font-weight:700;left:23px;"><span style="display:inline-block;transform:scaleX(1.0029);transform-origin:0 0">КУКУРУЗА</span></div>
<div class="t" id="g15" style="top:883.06px;font-size:14.1px;line-height:14.1px;color:#1a1a1a;font-weight:700;left:-1.5px;width:600px;text-align:right;"><span style="display:inline-block;transform:scaleX(1.0029);transform-origin:100% 0">2,3</span></div>
<div class="t" id="n15_2" style="top:883.69px;font-size:11px;line-height:11px;color:#222;font-weight:400;left:206px;width:600px;text-align:right;"><span style="display:inline-block;transform:scaleX(0.9356);transform-origin:100% 0">-</span></div>
<div class="t" id="n15_3" style="top:883.69px;font-size:11px;line-height:11px;color:#222;font-weight:400;left:391.5px;width:600px;text-align:right;"><span style="display:inline-block;transform:scaleX(0.9356);transform-origin:100% 0">-</span></div>
<div class="t" id="n15_4" style="top:883.69px;font-size:11px;line-height:11px;color:#222;font-weight:400;left:593.5px;width:600px;text-align:right;"><span style="display:inline-block;transform:scaleX(0.9356);transform-origin:100% 0">320,18</span></div>
<div class="t" id="n15_5" style="top:883.69px;font-size:11px;line-height:11px;color:#222;font-weight:400;left:778.5px;width:600px;text-align:right;"><span style="display:inline-block;transform:scaleX(0.9356);transform-origin:100% 0">10 010,00</span></div>
<div class="t" id="n15_6" style="top:883.69px;font-size:11px;line-height:11px;color:#222;font-weight:400;left:981px;width:600px;text-align:right;"><span style="display:inline-block;transform:scaleX(0.9356);transform-origin:100% 0">-</span></div>
<div class="t" id="n15_7" style="top:883.69px;font-size:11px;line-height:11px;color:#222;font-weight:400;left:1165.5px;width:600px;text-align:right;"><span style="display:inline-block;transform:scaleX(0.9356);transform-origin:100% 0">-</span></div>
<div class="t" id="tot0" style="top:916.69px;font-size:11px;line-height:11px;color:#111;font-weight:700;left:206px;width:600px;text-align:right;"><span style="display:inline-block;transform:scaleX(1.0146);transform-origin:100% 0">3 858,25</span></div>
<div class="t" id="tot1" style="top:916.69px;font-size:11px;line-height:11px;color:#111;font-weight:700;left:391.5px;width:600px;text-align:right;"><span style="display:inline-block;transform:scaleX(1.0146);transform-origin:100% 0">476 150,20</span></div>
<div class="t" id="tot2" style="top:916.69px;font-size:11px;line-height:11px;color:#111;font-weight:700;left:593.5px;width:600px;text-align:right;"><span style="display:inline-block;transform:scaleX(1.0146);transform-origin:100% 0">941,43</span></div>
<div class="t" id="tot3" style="top:916.69px;font-size:11px;line-height:11px;color:#111;font-weight:700;left:778.5px;width:600px;text-align:right;"><span style="display:inline-block;transform:scaleX(1.0146);transform-origin:100% 0">28 514,69</span></div>
<div class="t" id="tot4" style="top:916.69px;font-size:11px;line-height:11px;color:#111;font-weight:700;left:981px;width:600px;text-align:right;"><span style="display:inline-block;transform:scaleX(1.0146);transform-origin:100% 0">420,30</span></div>
<div class="t" id="tot5" style="top:916.69px;font-size:11px;line-height:11px;color:#111;font-weight:700;left:1165.5px;width:600px;text-align:right;"><span style="display:inline-block;transform:scaleX(1.0146);transform-origin:100% 0">37 631,45</span></div>
<div class="t" id="pg" style="top:950.69px;font-size:11px;line-height:11px;color:#555;font-weight:400;left:1158px;width:600px;text-align:right;"><span style="display:inline-block;transform:scaleX(0.9286);transform-origin:100% 0">1 - 16</span></div>
</body></html>
